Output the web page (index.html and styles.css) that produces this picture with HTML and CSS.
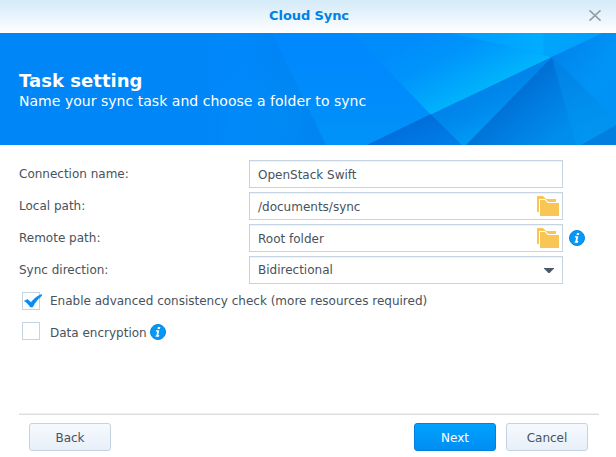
FILE: index.html
```html
<!DOCTYPE html>
<html lang="en">
<head>
<meta charset="utf-8">
<title>Cloud Sync</title>
<link rel="stylesheet" href="styles.css">
</head>
<body>
<svg class="defs" aria-hidden="true">
  <symbol id="folder" viewBox="0 0 22 20">
    <path fill="#f9c555" d="M0 0h6l3 3h10v3H11L8 3H2v13H0z"/>
    <path fill="#f9c555" d="M3 4h5l3 3h11v13H3z"/>
    <path fill="none" stroke="#fff" d="M2.500 16V3.500h5.700l3 3H22"/>
  </symbol>
  <symbol id="info" viewBox="0 0 16 16">
    <circle cx="8" cy="8" r="7.500" fill="#0798f5" stroke="#0587e2"/>
    <path fill="#fff" d="M8 3h2.300l-.5 2H7.500zM6 6.200h3.300L8.300 11h1l-.4 1.700H5.500l.3-1.200h.6l.7-4H5.800z"/>
  </symbol>
</svg>
<div class="window">
  <header class="titlebar">
    <span></span>
    <h1 class="title">Cloud Sync</h1>
    <svg class="close" viewBox="0 0 12 11"><path d="M.5.3l11 10.400M11.500.3L.5 10.700" stroke="#929da6" stroke-width="1.600"/></svg>
  </header>
  <section class="banner">
    <svg class="facets" viewBox="0 33 616 112" preserveAspectRatio="none">
      <defs>
        <linearGradient id="fade" gradientUnits="userSpaceOnUse" x1="200" y1="0" x2="310" y2="0"><stop offset="0" stop-color="#0086f6"/><stop offset=".3" stop-color="#0088fb"/><stop offset="1" stop-color="#0083f2"/></linearGradient>
        <linearGradient id="left" x1="0" y1="0" x2="0" y2="1"><stop offset="0" stop-color="#0088ff"/><stop offset=".5" stop-color="#008bfc"/><stop offset="1" stop-color="#0093f8"/></linearGradient>
        <linearGradient id="cyan" gradientUnits="userSpaceOnUse" x1="425" y1="33" x2="462" y2="104"><stop offset="0" stop-color="#008cfb"/><stop offset=".4" stop-color="#0095fb"/><stop offset="1" stop-color="#00b5fb"/></linearGradient>
        <linearGradient id="top" x1="0" y1="0" x2="1" y2="0"><stop offset="0" stop-color="#009aff"/><stop offset=".6" stop-color="#00adff"/><stop offset=".62" stop-color="#00a5fb"/><stop offset="1" stop-color="#00a0ff"/></linearGradient>
        <linearGradient id="mid" gradientUnits="userSpaceOnUse" x1="490" y1="85" x2="508" y2="122"><stop offset="0" stop-color="#0083e9"/><stop offset=".5" stop-color="#008bee"/><stop offset="1" stop-color="#009af5"/></linearGradient>
        <linearGradient id="dark" gradientUnits="userSpaceOnUse" x1="505" y1="95" x2="548" y2="145"><stop offset="0" stop-color="#006ed3"/><stop offset=".5" stop-color="#007ee2"/><stop offset="1" stop-color="#008dec"/></linearGradient>
        <linearGradient id="low" x1="0" y1="0" x2="1" y2="1"><stop offset="0" stop-color="#006bd6"/><stop offset=".4" stop-color="#006fdc"/><stop offset="1" stop-color="#0080ea"/></linearGradient>
        <linearGradient id="right" x1="0" y1="0" x2="1" y2="1"><stop offset="0" stop-color="#0080e8"/><stop offset=".6" stop-color="#0094f7"/><stop offset="1" stop-color="#0091f4"/></linearGradient>
        <linearGradient id="wedge" x1="0" y1="0" x2=".3" y2="1"><stop offset="0" stop-color="#007fe4"/><stop offset=".6" stop-color="#008eec"/><stop offset="1" stop-color="#0095f1"/></linearGradient>
        <radialGradient id="glow" gradientUnits="userSpaceOnUse" cx="275" cy="120" r="65"><stop offset="0" stop-color="#008ef3" stop-opacity=".6"/><stop offset="1" stop-color="#008ef3" stop-opacity="0"/></radialGradient>
      </defs>
      <path fill="#0086f6" d="M0 33h616v112H0z"/>
      <path fill="url(#fade)" d="M200 33h72l54 112H200z"/>
      <path fill="url(#glow)" d="M200 33h72l54 112H200z"/>
      <path fill="url(#left)" d="M272 33h87l72 81-64 31h-41z"/>
      <path fill="url(#cyan)" d="M352 33h100l100 24-121 58z"/>
      <path fill="url(#top)" d="M450 33h153l-51 24z"/>
      <path fill="url(#low)" d="M367 145l64-31 32 31z"/>
      <path fill="url(#mid)" d="M431 114.500L552 57l-85 88h-5z"/>
      <path fill="url(#dark)" d="M552 57l-86 88h111z"/>
      <path fill="url(#right)" d="M552 57l51-24h13v87z"/>
      <path fill="url(#wedge)" d="M552 57l64 62v26h-40z"/>
      <path fill="#007fe0" d="M616 125v20h-35z"/>
    </svg>
    <h2 class="heading">Task setting</h2>
    <p class="subheading">Name your sync task and choose a folder to sync</p>
  </section>
  <main class="form">
    <div class="row"><label class="label">Connection name:</label><div class="field"><span>OpenStack Swift</span></div></div>
    <div class="row"><label class="label">Local path:</label><div class="field"><span>/documents/sync</span><svg class="folder"><use href="#folder"/></svg></div></div>
    <div class="row"><label class="label">Remote path:</label><div class="field"><span>Root folder</span><svg class="folder"><use href="#folder"/></svg></div><svg class="info"><use href="#info"/></svg></div>
    <div class="row"><label class="label">Sync direction:</label><div class="field select"><span>Bidirectional</span><svg class="arrow" viewBox="0 0 10 5"><path fill="#4b5a68" d="M0 0h10v.6L5.600 5H4.400L0 .6z"/></svg></div></div>
    <div class="check first"><span class="box"><svg class="tick" viewBox="0 0 18 14"><path fill="#058bf5" d="M.5 7L3.500 5.500 7 8.500C10 5 13 2 17.500.5V2C13.500 5 11 8.500 8.500 13H6.500C5 11 3 8.500.5 7z" stroke="#058bf5" stroke-width=".7"/></svg></span><span>Enable advanced consistency check (more resources required)</span></div>
    <div class="check second"><span class="box"></span><span class="text">Data encryption</span><svg class="info"><use href="#info"/></svg></div>
  </main>
  <footer class="footer">
    <button class="button">Back</button>
    <button class="button primary">Next</button>
    <button class="button">Cancel</button>
  </footer>
</div>
</body>
</html>
```
FILE: styles.css
```css
* { box-sizing: border-box; }
body {
  margin: 0;
  background: #fff;
  color: #47525d;
  font: 12px/16px Verdana, "DejaVu Sans", sans-serif;
}
.defs { position: absolute; width: 0; height: 0; }
.window { display: flex; flex-direction: column; width: 616px; height: 457px; overflow: hidden; }
.titlebar {
  display: grid;
  grid-template-columns: 1fr auto 1fr;
  align-items: center;
  height: 33px;
  padding: 0 15px 1px 17px;
  background: linear-gradient(#d5ebf8 0, #d8ecf9 4px, #fff 33px);
}
.title { margin: 0; color: #0080e8; font-size: 13px; line-height: 16px; letter-spacing: -.1px; }
.close { width: 12px; height: 11px; margin-bottom: 1px; justify-self: end; }
.banner { position: relative; height: 112px; padding: 37px 19px 0; color: #fff; background: #0086f6; }
.facets { position: absolute; inset: 0; width: 100%; height: 100%; }
.heading, .subheading { position: relative; width: max-content; margin: 0; white-space: nowrap; }
.heading { font-size: 18px; line-height: 22px; letter-spacing: .04px; }
.subheading { font-size: 14px; line-height: 18px; letter-spacing: .03px; }
.form { flex: 1; padding: 15px 19px 0; }
.row { display: flex; align-items: center; height: 28px; margin-bottom: 4px; }
.label { width: 230px; white-space: nowrap; }
.field {
  display: flex;
  align-items: center;
  justify-content: space-between;
  width: 314px;
  height: 28px;
  padding: 1px 3px 0 8px;
  border: 1px solid #c6d3e0;
  box-shadow: inset 0 1px #f0f3f6;
}
.select { padding: 0 8px 1px; }
.folder { width: 22px; height: 20px; margin-bottom: 1px; }
.arrow { width: 10px; height: 5px; margin-top: 2px; }
.info { width: 16px; height: 16px; margin-left: 6px; flex: none; }
.check { display: flex; align-items: center; height: 18px; margin-left: 3px; white-space: nowrap; }
.first { margin-top: 8px; }
.second { margin-top: 12px; }
.second .text { margin-top: 3px; }
.second .info { margin-top: 2px; }
.box { width: 18px; height: 18px; margin-right: 10px; border: 1px solid #c6d3e0; flex: none; }
.tick { display: block; width: 18px; height: 14px; margin: 1px 0 0 1px; overflow: visible; }
.check .info { margin-left: 3px; }
.footer {
  display: flex;
  gap: 10px;
  height: 43px;
  margin: 0 17px 0 19px;
  padding: 8px 11px 0 10px;
  border-top: 1px solid #dcdddf;
  box-shadow: 0 -1px #f0f0f0;
}
.button {
  width: 82px;
  height: 28px;
  padding: 1px 0 0;
  border: 1px solid #c5d2df;
  border-radius: 3px;
  background: linear-gradient(#f6faff, #e9eff8);
  color: #47525d;
  font: inherit;
}
.primary { margin-left: auto; border-color: #0080df; background: linear-gradient(#00a2ff, #008df3); color: #fff; }
```
